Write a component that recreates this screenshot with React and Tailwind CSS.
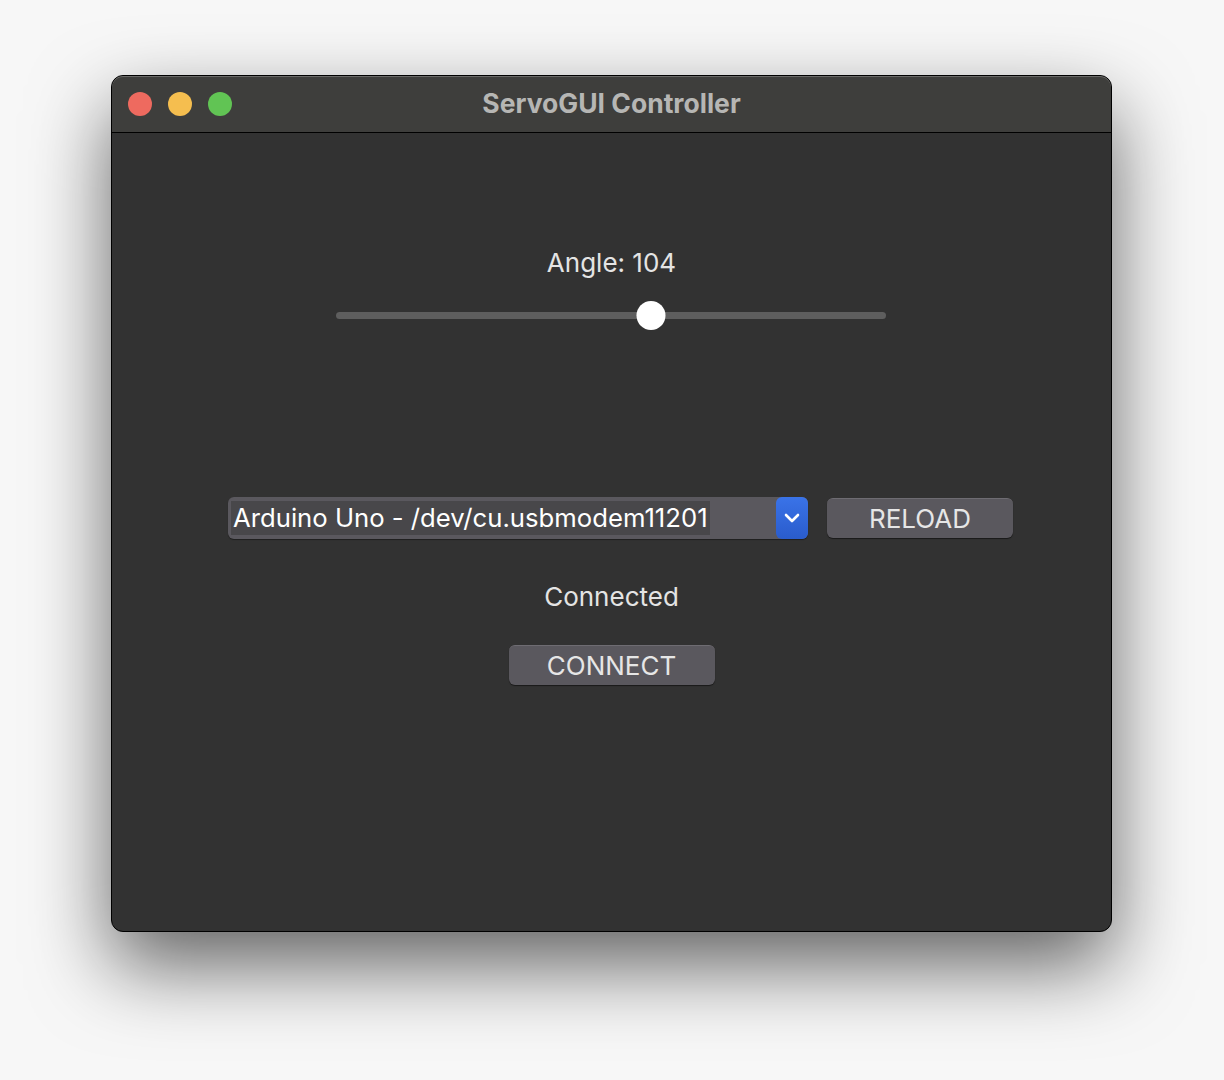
import { useState } from "react";

// 窗口控制按鈕
function TrafficLights() {
  return (
    <div className="absolute left-[16px] top-[16px] flex gap-[16px]">
      <span className="w-[24px] h-[24px] rounded-full bg-[#ee6a5f]" />
      <span className="w-[24px] h-[24px] rounded-full bg-[#f5be4f]" />
      <span className="w-[24px] h-[24px] rounded-full bg-[#61c454]" />
    </div>
  );
}

export default function App() {
  const [angle] = useState(104);
  // 滑塊位置：扣除滑塊寬度後按比例計算
  const thumbLeft = 14 + ((550 - 28) * angle) / 180;

  return (
    <div
      className="min-h-[1080px] w-[1224px] bg-[#f7f7f7] pt-[75px] pl-[111px]"
      style={{ fontFamily: "Inter, 'Liberation Sans', sans-serif" }}
    >
      <div className="w-[1001px] h-[857px] rounded-[12px] border border-black bg-[#323232] shadow-[0_34px_80px_rgba(0,0,0,0.6)] overflow-hidden flex flex-col">
        {/* 標題列 */}
        <div className="relative h-[57px] shrink-0 bg-[#3e3e3c] border-b border-black rounded-t-[11px] shadow-[inset_0_1px_0_#6a6a68] flex items-center justify-center">
          <TrafficLights />
          <span className="text-[26.5px] font-bold text-[#b6b6b4]">
            ServoGUI Controller
          </span>
        </div>

        {/* 主體 */}
        <div className="flex-1 flex flex-col items-center">
          <div className="mt-[114px] text-[26px] leading-[32px] text-[#e4e4e4]">
            Angle: {angle}
          </div>

          {/* 滑桿 */}
          <div className="relative mt-[22px] w-[550px] h-[28px] flex items-center -translate-x-[1px]">
            <div className="w-full h-[7px] rounded-full bg-[#5e5e5e]" />
            <div
              className="absolute top-0 w-[29px] h-[29px] rounded-full bg-white -translate-x-1/2"
              style={{ left: `${thumbLeft}px` }}
            />
          </div>

          {/* 埠選擇 */}
          <div className="mt-[168px] flex items-center gap-[19px] pl-[18px]">
            <div className="w-[580px] h-[42px] rounded-[6px] bg-[#5a585e] flex items-center pl-[3px] shadow-[0_1px_1px_rgba(0,0,0,0.4)]">
              <div className="flex-1 h-[36px] flex items-center">
                <span className="h-[34px] px-[2px] flex items-center bg-[#48474a] text-[25.7px] text-white">
                  Arduino Uno - /dev/cu.usbmodem11201
                </span>
              </div>
              <div className="w-[32px] h-[42px] rounded-[6px] bg-gradient-to-b from-[#3a73e8] to-[#2a5ccc] flex items-center justify-center">
                <svg width="16" height="10" viewBox="0 0 16 10" fill="none">
                  <path
                    d="M2 2l6 6 6-6"
                    stroke="white"
                    strokeWidth="2.6"
                    strokeLinecap="round"
                    strokeLinejoin="round"
                  />
                </svg>
              </div>
            </div>
            <button className="w-[186px] h-[40px] rounded-[6px] bg-[#5a585e] border-t border-[#6e6c72] shadow-[0_1px_1px_rgba(0,0,0,0.5)] text-[26px] text-[#e6e6e6]">
              RELOAD
            </button>
          </div>

          <div className="mt-[42px] text-[26px] leading-[32px] text-[#e4e4e4]">
            Connected
          </div>

          <button className="mt-[32px] w-[206px] h-[40px] rounded-[6px] bg-[#5a585e] border-t border-[#6e6c72] shadow-[0_1px_1px_rgba(0,0,0,0.5)] text-[26px] text-[#e6e6e6]">
            CONNECT
          </button>
        </div>
      </div>
    </div>
  );
}
